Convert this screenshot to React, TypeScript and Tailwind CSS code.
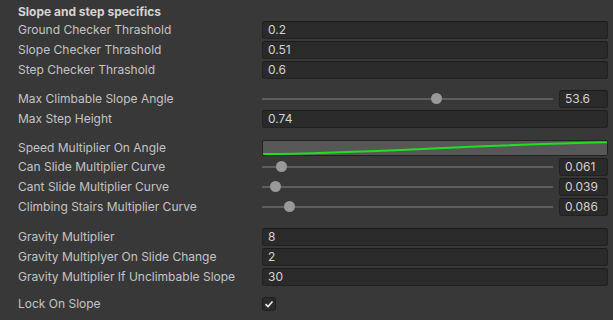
const font = { fontFamily: "Inter, 'Noto Sans', sans-serif" };

type FieldRow = { kind: "field"; label: string; value: string };
type SliderRow = { kind: "slider"; label: string; value: string; pos: number };
type CurveRow = { kind: "curve"; label: string };
type CheckRow = { kind: "check"; label: string; checked: boolean };
type Row = FieldRow | SliderRow | CurveRow | CheckRow;

const groups: { gap: string; rows: Row[] }[] = [
  {
    gap: "mt-0",
    rows: [
      { kind: "field", label: "Ground Checker Thrashold", value: "0.2" },
      { kind: "field", label: "Slope Checker Thrashold", value: "0.51" },
      { kind: "field", label: "Step Checker Thrashold", value: "0.6" },
    ],
  },
  {
    gap: "mt-[11px]",
    rows: [
      { kind: "slider", label: "Max Climbable Slope Angle", value: "53.6", pos: 174 },
      { kind: "field", label: "Max Step Height", value: "0.74" },
    ],
  },
  {
    gap: "mt-[12px]",
    rows: [
      { kind: "curve", label: "Speed Multiplier On Angle" },
      { kind: "slider", label: "Can Slide Multiplier Curve", value: "0.061", pos: 19 },
      { kind: "slider", label: "Cant Slide Multiplier Curve", value: "0.039", pos: 13 },
      { kind: "slider", label: "Climbing Stairs Multiplier Curve", value: "0.086", pos: 27 },
    ],
  },
  {
    gap: "mt-[12px]",
    rows: [
      { kind: "field", label: "Gravity Multiplier", value: "8" },
      { kind: "field", label: "Gravity Multiplyer On Slide Change", value: "2" },
      { kind: "field", label: "Gravity Multiplier If Unclimbable Slope", value: "30" },
    ],
  },
  { gap: "mt-[9px]", rows: [{ kind: "check", label: "Lock On Slope", checked: true }] },
];

function NumberBox({ value, className }: { value: string; className?: string }) {
  return (
    <div
      className={
        "h-[18px] flex items-center pl-[5px] rounded-[3px] bg-[#2a2a2a] border border-[#212121] border-t-[#1c1c1c] text-[#d2d2d2] text-[12px] " +
        (className ?? "")
      }
    >
      {value}
    </div>
  );
}

function Slider({ value, pos }: { value: string; pos: number }) {
  return (
    <div className="flex items-center h-[18px] gap-[6px]">
      <div className="relative flex-1 h-[18px]">
        <div className="absolute left-0 right-0 top-[8px] h-[2px] bg-[#5e5e5e]" />
        <div
          className="absolute top-[3px] w-[11px] h-[11px] rounded-full bg-[#999999]"
          style={{ left: pos - 5.5 }}
        />
      </div>
      <NumberBox value={value} className="w-[49px]" />
    </div>
  );
}

function Curve() {
  return (
    <div className="h-[16px] rounded-[2px] bg-[#575757] border border-[#222222] overflow-hidden">
      <svg viewBox="0 0 346 14" preserveAspectRatio="none" className="w-full h-full block">
        <path
          d="M0 13 C 110 12.5, 200 4, 346 1.2"
          fill="none"
          stroke="#1fe01f"
          strokeWidth="2"
        />
      </svg>
    </div>
  );
}

function Check() {
  return (
    <div className="w-[14px] h-[14px] rounded-[3px] bg-[#2a2a2a] border border-[#1f1f1f] flex items-center justify-center">
      <svg viewBox="0 0 10 10" className="w-[10px] h-[10px]">
        <path d="M1.5 5.2 L4 7.5 L8.5 2.5" fill="none" stroke="#eeeeee" strokeWidth="1.6" />
      </svg>
    </div>
  );
}

function RowView({ row }: { row: Row }) {
  const h = row.kind === "curve" ? "h-[16px]" : "h-[18px]";
  return (
    <div className={"flex items-center " + h}>
      <div className="w-[244px] shrink-0 text-[12px] text-[#c4c4c4] whitespace-nowrap">{row.label}</div>
      <div className="flex-1">
        {row.kind === "field" && <NumberBox value={row.value} />}
        {row.kind === "slider" && <Slider value={row.value} pos={row.pos} />}
        {row.kind === "curve" && <Curve />}
        {row.kind === "check" && <Check />}
      </div>
    </div>
  );
}

export default function App() {
  return (
    <div className="w-[613px] h-[320px] bg-[#383838] overflow-hidden" style={font}>
      <div className="pl-[18px] pr-[5px] pt-[3px] flex flex-col">
        <div className="h-[18px] flex items-center text-[12px] font-bold text-[#d4d4d4]">
          Slope and step specifics
        </div>
        {groups.map((g, i) => (
          <div key={i} className={"flex flex-col gap-[2px] " + g.gap}>
            {g.rows.map((r) => (
              <RowView key={r.label} row={r} />
            ))}
          </div>
        ))}
      </div>
    </div>
  );
}
